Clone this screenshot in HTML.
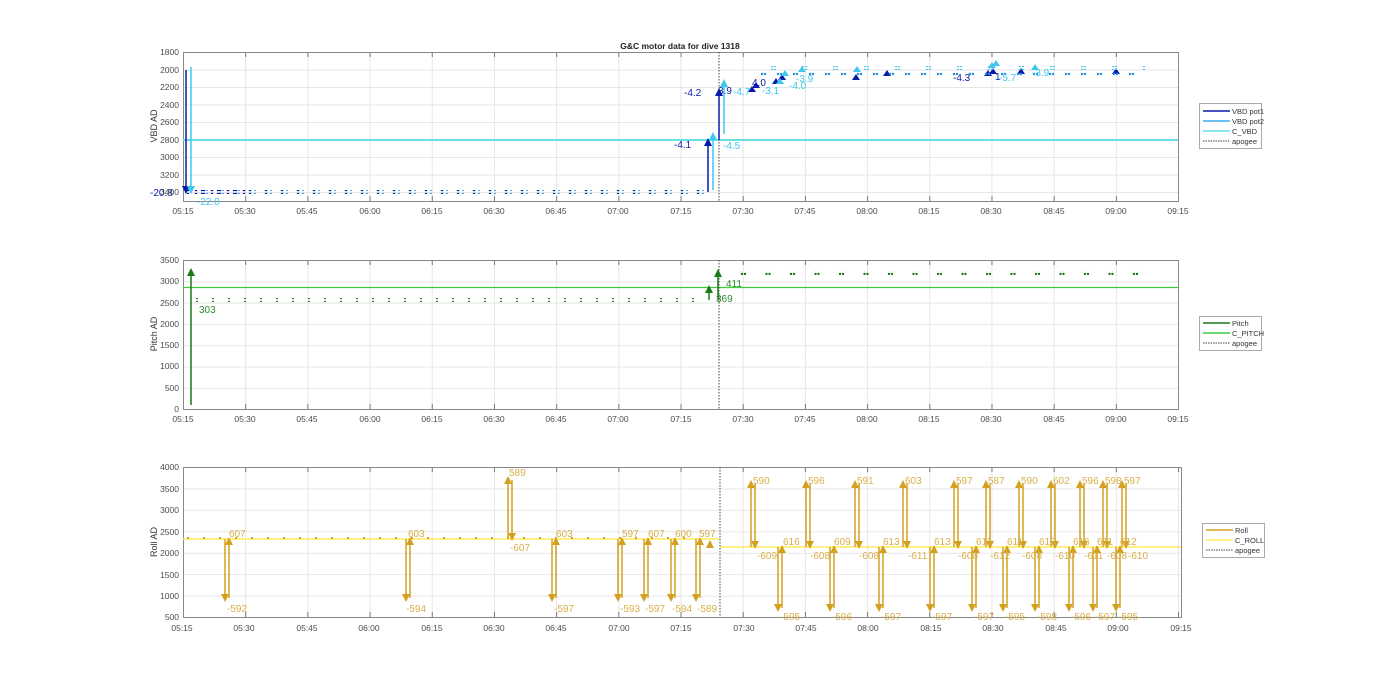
<!DOCTYPE html>
<html><head><meta charset="utf-8"><style>
html,body{margin:0;padding:0;background:#fff;}
svg{display:block;font-family:"Liberation Sans",sans-serif;}
.tl{font-size:8.5px;fill:#4d4d4d;}
.yl{font-size:8.5px;fill:#4d4d4d;text-anchor:end;}
.lg{font-size:7.5px;fill:#333;}
</style></head><body>
<svg width="1400" height="693" viewBox="0 0 1400 693" xmlns="http://www.w3.org/2000/svg">
<defs>
<pattern id="gx" x="183" y="0" width="62.19" height="700" patternUnits="userSpaceOnUse"><line x1="0.5" y1="0" x2="0.5" y2="700" stroke="#e6e6e6" stroke-width="1"/></pattern>
<pattern id="gyt" x="0" y="52" width="1400" height="17.5" patternUnits="userSpaceOnUse"><line x1="0" y1="0.5" x2="1400" y2="0.5" stroke="#e6e6e6"/></pattern>
<pattern id="gym" x="0" y="260" width="1400" height="21.29" patternUnits="userSpaceOnUse"><line x1="0" y1="0.5" x2="1400" y2="0.5" stroke="#e6e6e6"/></pattern>
<pattern id="gyb" x="0" y="467" width="1400" height="21.43" patternUnits="userSpaceOnUse"><line x1="0" y1="0.5" x2="1400" y2="0.5" stroke="#e6e6e6"/></pattern>
<pattern id="tk" x="183" y="0" width="62.19" height="700" patternUnits="userSpaceOnUse"><line x1="0.5" y1="0" x2="0.5" y2="700" stroke="#777"/></pattern>
<pattern id="db" x="186" y="0" width="8" height="4" patternUnits="userSpaceOnUse"><circle cx="2" cy="2" r="1.3" fill="#0a1aa8"/></pattern>
<pattern id="db2" x="200" y="0" width="16" height="4" patternUnits="userSpaceOnUse"><circle cx="2" cy="2" r="1.3" fill="#0a1aa8"/><circle cx="7" cy="2" r="1.2" fill="#3aaee8"/></pattern>
<pattern id="cb" x="760" y="0" width="16" height="4" patternUnits="userSpaceOnUse"><circle cx="2" cy="2" r="1.2" fill="#1e8ee0"/><circle cx="5" cy="2" r="1.2" fill="#1e8ee0"/></pattern>
<pattern id="cc" x="770" y="0" width="31" height="4" patternUnits="userSpaceOnUse"><circle cx="2" cy="2" r="1.2" fill="#3ec8f0"/><circle cx="5" cy="2" r="1.2" fill="#3ec8f0"/></pattern>
<pattern id="gd" x="195" y="0" width="16" height="4" patternUnits="userSpaceOnUse"><circle cx="2" cy="2" r="1.2" fill="#1a7a1a"/></pattern>
<pattern id="gd2" x="740" y="0" width="24.5" height="4" patternUnits="userSpaceOnUse"><circle cx="2" cy="2" r="1.2" fill="#1a7a1a"/><circle cx="5" cy="2" r="1.2" fill="#1a7a1a"/></pattern>
<pattern id="rd" x="186" y="0" width="16" height="4" patternUnits="userSpaceOnUse"><circle cx="2" cy="2" r="1.1" fill="#c99a1e"/></pattern>
<marker id="ab" markerWidth="8" markerHeight="8" refX="4" refY="4" orient="auto" markerUnits="userSpaceOnUse"><path d="M0,0 L8,4 L0,8 z" fill="#0a1aa8"/></marker>
<marker id="ac" markerWidth="8" markerHeight="8" refX="4" refY="4" orient="auto" markerUnits="userSpaceOnUse"><path d="M0,0 L8,4 L0,8 z" fill="#3ec8f0"/></marker>
<marker id="ag" markerWidth="8" markerHeight="8" refX="4" refY="4" orient="auto" markerUnits="userSpaceOnUse"><path d="M0,0 L8,4 L0,8 z" fill="#1a7a1a"/></marker>
<marker id="ar" markerWidth="8" markerHeight="8" refX="4" refY="4" orient="auto" markerUnits="userSpaceOnUse"><path d="M0,0 L8,4 L0,8 z" fill="#d4a020"/></marker>
</defs>

<text x="680" y="49" text-anchor="middle" font-size="8.5" font-weight="bold" fill="#222">G&amp;C motor data for dive 1318</text>

<!-- TOP AXES -->
<rect x="183" y="52" width="995" height="149" fill="url(#gx)"/>
<rect x="183" y="52" width="995" height="149" fill="url(#gyt)"/>
<rect x="183" y="52" width="995" height="5" fill="url(#tk)"/>
<rect x="183" y="196" width="995" height="5" fill="url(#tk)"/>
<rect x="183.5" y="52.5" width="995" height="149" fill="none" stroke="#888"/>
<line x1="183" y1="140" x2="1178" y2="140" stroke="#66e0e6" stroke-width="2"/>
<line x1="719" y1="52" x2="719" y2="201" stroke="#444" stroke-dasharray="1.5,1.5"/>
<rect x="196" y="190" width="510" height="4" fill="url(#db2)"/>
<rect x="186" y="190" width="60" height="4" fill="url(#db)"/>
<line x1="186" y1="70" x2="186" y2="190" stroke="#0a1aa8" stroke-width="1.5" marker-end="url(#ab)"/>
<line x1="191" y1="67" x2="191" y2="190" stroke="#3ec8f0" stroke-width="1.5" marker-end="url(#ac)"/>
<line x1="708" y1="192" x2="708" y2="142" stroke="#0a1aa8" stroke-width="1.5" marker-end="url(#ab)"/>
<line x1="713" y1="190" x2="713" y2="136" stroke="#3ec8f0" stroke-width="1.5" marker-end="url(#ac)"/>
<line x1="719" y1="140" x2="719" y2="92" stroke="#0a1aa8" stroke-width="1.5" marker-end="url(#ab)"/>
<line x1="724" y1="134" x2="724" y2="83" stroke="#3ec8f0" stroke-width="1.5" marker-end="url(#ac)"/>
<path d="M748,92 l4,-6 l4,6z M752,88 l4,-6 l4,6z M772,84 l4,-6 l4,6z M778,80 l4,-6 l4,6z M852,80 l4,-6 l4,6z M883,76 l4,-6 l4,6z M984,76 l4,-6 l4,6z M989,74 l4,-6 l4,6z M1017,74 l4,-6 l4,6z M1112,74 l4,-6 l4,6z" fill="#0a1aa8"/>
<path d="M776,84 l4,-6 l4,6z M781,76 l4,-6 l4,6z M853,72 l4,-6 l4,6z M988,68 l4,-6 l4,6z M992,66 l4,-6 l4,6z M1031,70 l4,-6 l4,6z M798,72 l4,-6 l4,6z" fill="#3ec8f0"/>
<rect x="760" y="72" width="380" height="4" fill="url(#cb)"/>
<rect x="770" y="66" width="375" height="4" fill="url(#cc)"/>
<g font-size="10">
<text x="150" y="196" fill="#0a1aa8">-20.8</text>
<text x="197" y="205" fill="#3ec8f0">-22.0</text>
<text x="674" y="148" fill="#0a1aa8">-4.1</text>
<text x="723" y="149" fill="#3ec8f0">-4.5</text>
<text x="684" y="96" fill="#0a1aa8">-4.2</text>
<text x="718" y="94" fill="#0a1aa8">3.9</text>
<text x="733" y="95" fill="#3ec8f0">-4.7</text>
<text x="752" y="86" fill="#0a1aa8">4.0</text>
<text x="762" y="94" fill="#3ec8f0">-3.1</text>
<text x="789" y="89" fill="#3ec8f0">-4.0</text>
<text x="796" y="82" fill="#3ec8f0">-3.9</text>
<text x="953" y="81" fill="#0a1aa8">-4.3</text>
<text x="995" y="80" fill="#0a1aa8">1</text>
<text x="999" y="81" fill="#3ec8f0">-5.7</text>
<text x="1032" y="76" fill="#3ec8f0">-3.9</text>
</g>
<g class="yl">
<text x="179" y="55">1800</text><text x="179" y="73">2000</text><text x="179" y="90">2200</text><text x="179" y="108">2400</text><text x="179" y="125">2600</text><text x="179" y="143">2800</text><text x="179" y="160">3000</text><text x="179" y="178">3200</text><text x="179" y="195">3400</text>
</g>
<text transform="translate(157,126) rotate(-90)" font-size="9" fill="#333" text-anchor="middle">VBD AD</text>
<g class="tl" text-anchor="middle">
<text x="183" y="214">05:15</text><text x="245" y="214">05:30</text><text x="307" y="214">05:45</text><text x="370" y="214">06:00</text><text x="432" y="214">06:15</text><text x="494" y="214">06:30</text><text x="556" y="214">06:45</text><text x="618" y="214">07:00</text><text x="681" y="214">07:15</text><text x="743" y="214">07:30</text><text x="805" y="214">07:45</text><text x="867" y="214">08:00</text><text x="929" y="214">08:15</text><text x="991" y="214">08:30</text><text x="1054" y="214">08:45</text><text x="1116" y="214">09:00</text><text x="1178" y="214">09:15</text>
</g>
<rect x="1199.5" y="103.5" width="62" height="45" fill="#fff" stroke="#aaa"/>
<line x1="1203" y1="111" x2="1230" y2="111" stroke="#0a1aa8" stroke-width="1.5"/>
<line x1="1203" y1="121" x2="1230" y2="121" stroke="#3aaee8" stroke-width="1.5"/>
<line x1="1203" y1="131" x2="1230" y2="131" stroke="#66e0e6" stroke-width="1.5"/>
<line x1="1203" y1="141" x2="1230" y2="141" stroke="#444" stroke-dasharray="1.5,1"/>
<g class="lg"><text x="1232" y="114">VBD pot1</text><text x="1232" y="124">VBD pot2</text><text x="1232" y="134">C_VBD</text><text x="1232" y="144">apogee</text></g>

<!-- MIDDLE AXES -->
<rect x="183" y="260" width="995" height="149" fill="url(#gx)"/>
<rect x="183" y="260" width="995" height="149" fill="url(#gym)"/>
<rect x="183" y="260" width="995" height="5" fill="url(#tk)"/>
<rect x="183" y="404" width="995" height="5" fill="url(#tk)"/>
<rect x="183.5" y="260.5" width="995" height="149" fill="none" stroke="#888"/>
<line x1="183" y1="287.5" x2="1178" y2="287.5" stroke="#3ccc3c" stroke-width="1.2"/>
<line x1="719" y1="260" x2="719" y2="409" stroke="#444" stroke-dasharray="1.5,1.5"/>
<rect x="195" y="298" width="510" height="4" fill="url(#gd)"/>
<rect x="740" y="271" width="400" height="4" fill="url(#gd2)"/>
<line x1="191" y1="405" x2="191" y2="272" stroke="#1a7a1a" stroke-width="1.5" marker-end="url(#ag)"/>
<line x1="709" y1="300" x2="709" y2="289" stroke="#1a7a1a" stroke-width="1.5" marker-end="url(#ag)"/>
<line x1="718" y1="300" x2="718" y2="273" stroke="#1a7a1a" stroke-width="1.5" marker-end="url(#ag)"/>
<g font-size="10" fill="#2e8b2e"><text x="199" y="313">303</text><text x="716" y="302">369</text><text x="726" y="287">411</text></g>
<g class="yl">
<text x="179" y="263">3500</text><text x="179" y="284">3000</text><text x="179" y="306">2500</text><text x="179" y="327">2000</text><text x="179" y="348">1500</text><text x="179" y="369">1000</text><text x="179" y="391">500</text><text x="179" y="412">0</text>
</g>
<text transform="translate(157,334) rotate(-90)" font-size="9" fill="#333" text-anchor="middle">Pitch AD</text>
<g class="tl" text-anchor="middle">
<text x="183" y="422">05:15</text><text x="245" y="422">05:30</text><text x="307" y="422">05:45</text><text x="370" y="422">06:00</text><text x="432" y="422">06:15</text><text x="494" y="422">06:30</text><text x="556" y="422">06:45</text><text x="618" y="422">07:00</text><text x="681" y="422">07:15</text><text x="743" y="422">07:30</text><text x="805" y="422">07:45</text><text x="867" y="422">08:00</text><text x="929" y="422">08:15</text><text x="991" y="422">08:30</text><text x="1054" y="422">08:45</text><text x="1116" y="422">09:00</text><text x="1178" y="422">09:15</text>
</g>
<rect x="1199.5" y="316.5" width="62" height="34" fill="#fff" stroke="#aaa"/>
<line x1="1203" y1="323" x2="1230" y2="323" stroke="#1a7a1a" stroke-width="1.5"/>
<line x1="1203" y1="333" x2="1230" y2="333" stroke="#3ccc3c" stroke-width="1.5"/>
<line x1="1203" y1="343" x2="1230" y2="343" stroke="#444" stroke-dasharray="1.5,1"/>
<g class="lg"><text x="1232" y="326">Pitch</text><text x="1232" y="336">C_PITCH</text><text x="1232" y="346">apogee</text></g>

<!-- BOTTOM AXES -->
<rect x="183" y="467" width="998" height="150" fill="url(#gx)"/>
<rect x="183" y="467" width="998" height="150" fill="url(#gyb)"/>
<rect x="183" y="467" width="998" height="5" fill="url(#tk)"/>
<rect x="183" y="612" width="998" height="5" fill="url(#tk)"/>
<rect x="183.5" y="467.5" width="998" height="150" fill="none" stroke="#888"/>
<line x1="183" y1="539" x2="720" y2="539" stroke="#ffec5a" stroke-width="1.5"/>
<line x1="720" y1="547" x2="1181" y2="547" stroke="#ffec5a" stroke-width="1.5"/>
<line x1="720" y1="467" x2="720" y2="617" stroke="#444" stroke-dasharray="1.5,1.5"/>
<rect x="186" y="537" width="500" height="4" fill="url(#rd)"/>
<g stroke="#d4a020" stroke-width="1.5">
<!-- pre-apogee down pairs -->
<line x1="225" y1="539" x2="225" y2="598" marker-end="url(#ar)"/><line x1="229" y1="598" x2="229" y2="541" marker-end="url(#ar)"/>
<line x1="406" y1="539" x2="406" y2="598" marker-end="url(#ar)"/><line x1="410" y1="598" x2="410" y2="541" marker-end="url(#ar)"/>
<line x1="508" y1="539" x2="508" y2="480" marker-end="url(#ar)"/><line x1="512" y1="480" x2="512" y2="537" marker-end="url(#ar)"/>
<line x1="552" y1="539" x2="552" y2="598" marker-end="url(#ar)"/><line x1="556" y1="598" x2="556" y2="541" marker-end="url(#ar)"/>
<line x1="618" y1="539" x2="618" y2="598" marker-end="url(#ar)"/><line x1="622" y1="598" x2="622" y2="541" marker-end="url(#ar)"/>
<line x1="644" y1="539" x2="644" y2="598" marker-end="url(#ar)"/><line x1="648" y1="598" x2="648" y2="541" marker-end="url(#ar)"/>
<line x1="671" y1="539" x2="671" y2="598" marker-end="url(#ar)"/><line x1="675" y1="598" x2="675" y2="541" marker-end="url(#ar)"/>
<line x1="696" y1="539" x2="696" y2="598" marker-end="url(#ar)"/><line x1="700" y1="598" x2="700" y2="541" marker-end="url(#ar)"/>
<line x1="710" y1="548" x2="710" y2="544" marker-end="url(#ar)"/>
<!-- post up pairs -->
<line x1="751" y1="547" x2="751" y2="484" marker-end="url(#ar)"/><line x1="755" y1="484" x2="755" y2="545" marker-end="url(#ar)"/>
<line x1="806" y1="547" x2="806" y2="484" marker-end="url(#ar)"/><line x1="810" y1="484" x2="810" y2="545" marker-end="url(#ar)"/>
<line x1="855" y1="547" x2="855" y2="484" marker-end="url(#ar)"/><line x1="859" y1="484" x2="859" y2="545" marker-end="url(#ar)"/>
<line x1="903" y1="547" x2="903" y2="484" marker-end="url(#ar)"/><line x1="907" y1="484" x2="907" y2="545" marker-end="url(#ar)"/>
<line x1="954" y1="547" x2="954" y2="484" marker-end="url(#ar)"/><line x1="958" y1="484" x2="958" y2="545" marker-end="url(#ar)"/>
<line x1="986" y1="547" x2="986" y2="484" marker-end="url(#ar)"/><line x1="990" y1="484" x2="990" y2="545" marker-end="url(#ar)"/>
<line x1="1019" y1="547" x2="1019" y2="484" marker-end="url(#ar)"/><line x1="1023" y1="484" x2="1023" y2="545" marker-end="url(#ar)"/>
<line x1="1051" y1="547" x2="1051" y2="484" marker-end="url(#ar)"/><line x1="1055" y1="484" x2="1055" y2="545" marker-end="url(#ar)"/>
<line x1="1080" y1="547" x2="1080" y2="484" marker-end="url(#ar)"/><line x1="1084" y1="484" x2="1084" y2="545" marker-end="url(#ar)"/>
<line x1="1103" y1="547" x2="1103" y2="484" marker-end="url(#ar)"/><line x1="1107" y1="484" x2="1107" y2="545" marker-end="url(#ar)"/>
<line x1="1122" y1="547" x2="1122" y2="484" marker-end="url(#ar)"/><line x1="1126" y1="484" x2="1126" y2="545" marker-end="url(#ar)"/>
<!-- post down pairs -->
<line x1="778" y1="547" x2="778" y2="608" marker-end="url(#ar)"/><line x1="782" y1="608" x2="782" y2="549" marker-end="url(#ar)"/>
<line x1="830" y1="547" x2="830" y2="608" marker-end="url(#ar)"/><line x1="834" y1="608" x2="834" y2="549" marker-end="url(#ar)"/>
<line x1="879" y1="547" x2="879" y2="608" marker-end="url(#ar)"/><line x1="883" y1="608" x2="883" y2="549" marker-end="url(#ar)"/>
<line x1="930" y1="547" x2="930" y2="608" marker-end="url(#ar)"/><line x1="934" y1="608" x2="934" y2="549" marker-end="url(#ar)"/>
<line x1="972" y1="547" x2="972" y2="608" marker-end="url(#ar)"/><line x1="976" y1="608" x2="976" y2="549" marker-end="url(#ar)"/>
<line x1="1003" y1="547" x2="1003" y2="608" marker-end="url(#ar)"/><line x1="1007" y1="608" x2="1007" y2="549" marker-end="url(#ar)"/>
<line x1="1035" y1="547" x2="1035" y2="608" marker-end="url(#ar)"/><line x1="1039" y1="608" x2="1039" y2="549" marker-end="url(#ar)"/>
<line x1="1069" y1="547" x2="1069" y2="608" marker-end="url(#ar)"/><line x1="1073" y1="608" x2="1073" y2="549" marker-end="url(#ar)"/>
<line x1="1093" y1="547" x2="1093" y2="608" marker-end="url(#ar)"/><line x1="1097" y1="608" x2="1097" y2="549" marker-end="url(#ar)"/>
<line x1="1116" y1="547" x2="1116" y2="608" marker-end="url(#ar)"/><line x1="1120" y1="608" x2="1120" y2="549" marker-end="url(#ar)"/>
</g>
<g font-size="10" fill="#d9b04a">
<text x="229" y="537">607</text><text x="227" y="612">-592</text>
<text x="408" y="537">603</text><text x="406" y="612">-594</text>
<text x="509" y="476">589</text><text x="510" y="551">-607</text>
<text x="556" y="537">603</text><text x="554" y="612">-597</text>
<text x="622" y="537">597</text><text x="620" y="612">-593</text>
<text x="648" y="537">607</text><text x="645" y="612">-597</text>
<text x="675" y="537">600</text><text x="672" y="612">-594</text>
<text x="699" y="537">597</text><text x="697" y="612">-589</text>
<text x="753" y="484">590</text><text x="757" y="559">-609</text>
<text x="808" y="484">596</text><text x="810" y="559">-608</text>
<text x="857" y="484">591</text><text x="859" y="559">-608</text>
<text x="905" y="484">603</text><text x="908" y="559">-611</text>
<text x="956" y="484">597</text><text x="958" y="559">-608</text>
<text x="988" y="484">587</text><text x="990" y="559">-612</text>
<text x="1021" y="484">590</text><text x="1022" y="559">-608</text>
<text x="1053" y="484">602</text><text x="1055" y="559">-610</text>
<text x="1082" y="484">596</text><text x="1084" y="559">-611</text>
<text x="1105" y="484">598</text><text x="1107" y="559">-608</text>
<text x="1124" y="484">597</text><text x="1128" y="559">-610</text>
<text x="783" y="545">616</text><text x="780" y="620">-595</text>
<text x="834" y="545">609</text><text x="832" y="620">-596</text>
<text x="883" y="545">613</text><text x="881" y="620">-597</text>
<text x="934" y="545">613</text><text x="932" y="620">-597</text>
<text x="976" y="545">611</text><text x="974" y="620">-597</text>
<text x="1007" y="545">611</text><text x="1005" y="620">-595</text>
<text x="1039" y="545">613</text><text x="1037" y="620">-598</text>
<text x="1073" y="545">616</text><text x="1071" y="620">-596</text>
<text x="1097" y="545">611</text><text x="1095" y="620">-597</text>
<text x="1120" y="545">612</text><text x="1118" y="620">-595</text>
</g>
<g class="yl">
<text x="179" y="470">4000</text><text x="179" y="492">3500</text><text x="179" y="513">3000</text><text x="179" y="535">2500</text><text x="179" y="556">2000</text><text x="179" y="578">1500</text><text x="179" y="599">1000</text><text x="179" y="620">500</text>
</g>
<text transform="translate(157,542) rotate(-90)" font-size="9" fill="#333" text-anchor="middle">Roll AD</text>
<g class="tl" text-anchor="middle">
<text x="182" y="631">05:15</text><text x="244" y="631">05:30</text><text x="307" y="631">05:45</text><text x="369" y="631">06:00</text><text x="432" y="631">06:15</text><text x="494" y="631">06:30</text><text x="556" y="631">06:45</text><text x="619" y="631">07:00</text><text x="681" y="631">07:15</text><text x="744" y="631">07:30</text><text x="806" y="631">07:45</text><text x="868" y="631">08:00</text><text x="931" y="631">08:15</text><text x="993" y="631">08:30</text><text x="1056" y="631">08:45</text><text x="1118" y="631">09:00</text><text x="1181" y="631">09:15</text>
</g>
<rect x="1202.5" y="523.5" width="62" height="34" fill="#fff" stroke="#aaa"/>
<line x1="1206" y1="530" x2="1233" y2="530" stroke="#d4a020" stroke-width="1.5"/>
<line x1="1206" y1="540" x2="1233" y2="540" stroke="#ffec5a" stroke-width="1.5"/>
<line x1="1206" y1="550" x2="1233" y2="550" stroke="#444" stroke-dasharray="1.5,1"/>
<g class="lg"><text x="1235" y="533">Roll</text><text x="1235" y="543">C_ROLL</text><text x="1235" y="553">apogee</text></g>
</svg>
</body></html>
